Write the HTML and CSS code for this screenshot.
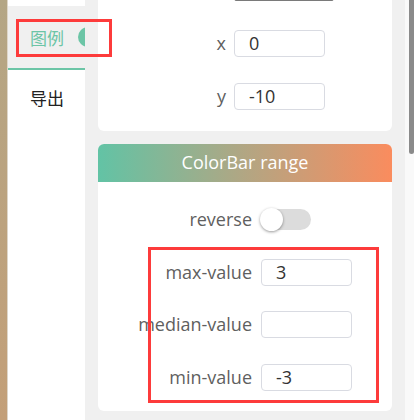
FILE: index.html
```html
<!DOCTYPE html>
<html lang="zh">
<head>
<meta charset="utf-8">
<title>ColorBar</title>
<link rel="stylesheet" href="styles.css">
</head>
<body>
<div class="app">
  <div class="edge"></div>
  <nav class="sidebar">
    <div class="sidebar-top"></div>
    <div class="tab tab-active">
      <span class="tab-label">图例</span>
      <span class="tab-pill"></span>
    </div>
    <div class="tab">
      <span class="tab-label tab-plain">导出</span>
    </div>
  </nav>
  <main class="main">
    <section class="card card-first">
      <div class="partial-row">
        <div class="input input-wide input-hover"></div>
      </div>
      <div class="form form-narrow">
        <label class="label">x</label>
        <div class="input">0</div>
        <label class="label">y</label>
        <div class="input">-10</div>
      </div>
    </section>
    <section class="card card-second">
      <header class="card-header">ColorBar range</header>
      <div class="form form-wide">
        <label class="label">reverse</label>
        <div class="switch">
          <span class="switch-track"></span>
          <span class="switch-knob"></span>
        </div>
        <label class="label">max-value</label>
        <div class="input">3</div>
        <label class="label">median-value</label>
        <div class="input"></div>
        <label class="label">min-value</label>
        <div class="input">-3</div>
      </div>
    </section>
  </main>
  <div class="scrollbar"><div class="scroll-thumb"></div></div>
</div>
<div class="mark mark-tab"></div>
<div class="mark mark-values"></div>
</body>
</html>
```
FILE: styles.css
```css
html, body {
  margin: 0;
  padding: 0;
}
body {
  width: 414px;
  height: 420px;
  overflow: hidden;
  background: #f0f0f0;
  font-family: "Open Sans", "Noto Sans CJK SC", sans-serif;
  position: relative;
}
.app {
  display: flex;
  height: 420px;
}
.edge {
  width: 7px;
  flex: none;
  background: linear-gradient(to bottom, #b4a685, #c39f78);
  border-right: 1px solid #ded6c9;
}
.sidebar {
  width: 77px;
  flex: none;
  background: #fff;
  display: flex;
  flex-direction: column;
  overflow: hidden;
}
.sidebar-top {
  height: 6px;
  background: #fff;
}
.tab {
  display: flex;
  align-items: center;
  height: 54px;
  padding-left: 22px;
  white-space: nowrap;
}
.tab-active {
  height: 62px;
  background: #f0f0f0;
  border-bottom: 2px solid #6cc5a6;
}
.tab-label {
  font-family: "Noto Sans CJK SC", sans-serif;
  font-size: 17px;
  color: #6cc5a6;
}
.tab-plain {
  color: #222;
}
.tab-pill {
  flex: none;
  width: 20px;
  height: 20px;
  border-radius: 10px;
  background: #6cc5a6;
  margin-left: 14px;
}
.main {
  width: 294px;
  flex: none;
  padding: 0 13px;
  display: flex;
  flex-direction: column;
  gap: 13px;
}
.card {
  background: #fff;
  border-radius: 6px;
}
.card-first {
  margin-top: -28px;
  padding-bottom: 21px;
}
.partial-row {
  padding-left: 136px;
  margin-bottom: 29px;
}
.form {
  display: grid;
  grid-auto-rows: 27px;
  row-gap: 25.5px;
  align-items: center;
}
.form-narrow {
  grid-template-columns: 128px 91px;
  column-gap: 8px;
}
.form-wide {
  grid-template-columns: 154px 91px;
  column-gap: 9px;
  padding-top: 24.5px;
  padding-bottom: 20px;
}
.label {
  text-align: right;
  font-size: 18px;
  color: #5f5f5f;
  line-height: 27px;
  white-space: nowrap;
}
.input {
  box-sizing: border-box;
  height: 27px;
  width: 91px;
  border: 1px solid #d9dbe2;
  border-radius: 4px;
  background: #fff;
  padding-left: 14px;
  font-size: 18px;
  line-height: 25px;
  color: #333;
}
.input-wide {
  width: 100px;
  height: 29px;
}
.input-hover {
  border-color: #7a7a7a;
  border-radius: 2px;
}
.card-second {
  overflow: hidden;
}
.card-header {
  height: 38px;
  line-height: 36px;
  text-align: center;
  color: #fff;
  font-size: 18px;
  background: linear-gradient(to right, #62c3a5, #b2a683 50%, #fa8c5e);
}
.switch {
  position: relative;
  width: 51px;
  height: 23px;
  margin-left: -1px;
}
.switch-track {
  position: absolute;
  left: 3px;
  top: 1px;
  width: 48px;
  height: 21px;
  border-radius: 11px;
  background: #dcdcdc;
}
.switch-knob {
  position: absolute;
  left: 0;
  top: 0;
  width: 23px;
  height: 23px;
  border-radius: 50%;
  background: #fff;
  box-shadow: 0 1px 3px rgba(0, 0, 0, 0.4);
}
.scrollbar {
  width: 9px;
  flex: none;
  background: #f9f9f9;
}
.scroll-thumb {
  margin-left: 4px;
  width: 5px;
  height: 154px;
  background: #8a8a8a;
  border-radius: 0 0 3px 3px;
}
.mark {
  position: absolute;
  border: 3px solid #fd3b3b;
  box-sizing: border-box;
}
.mark-tab {
  left: 16px;
  top: 19px;
  width: 96px;
  height: 38px;
}
.mark-values {
  left: 148px;
  top: 247px;
  width: 231px;
  height: 156px;
}
```
